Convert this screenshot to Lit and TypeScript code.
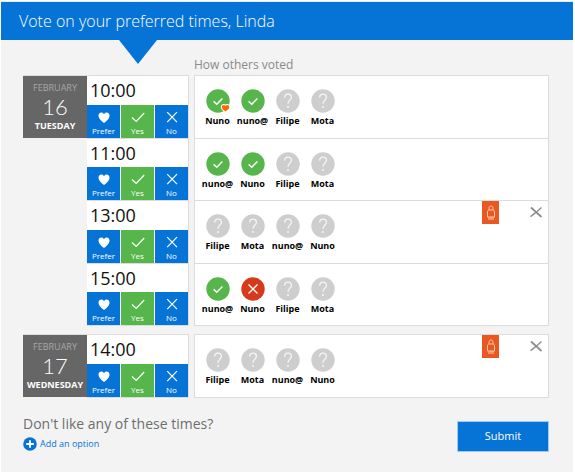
import { LitElement, html, css, svg } from "lit";
import { customElement, property } from "lit/decorators.js";

type Vote = "prefer" | "yes" | "no" | "none";
interface Person { name: string; vote: Vote; }
interface Slot { time: string; people: Person[]; conflict?: boolean; }
interface Day { month: string; day: string; weekday: string; slots: Slot[]; }

const p = (name: string, vote: Vote = "none"): Person => ({ name, vote });

const DAYS: Day[] = [
  {
    month: "FEBRUARY", day: "16", weekday: "TUESDAY",
    slots: [
      { time: "10:00", people: [p("Nuno", "prefer"), p("nuno@", "yes"), p("Filipe"), p("Mota")] },
      { time: "11:00", people: [p("nuno@", "yes"), p("Nuno", "yes"), p("Filipe"), p("Mota")] },
      { time: "13:00", people: [p("Filipe"), p("Mota"), p("nuno@"), p("Nuno")], conflict: true },
      { time: "15:00", people: [p("nuno@", "yes"), p("Nuno", "no"), p("Filipe"), p("Mota")] },
    ],
  },
  {
    month: "FEBRUARY", day: "17", weekday: "WEDNESDAY",
    slots: [
      { time: "14:00", people: [p("Filipe"), p("Mota"), p("nuno@"), p("Nuno")], conflict: true },
    ],
  },
];

const HEART = "M8 14 C4 11 2.5 9 2.5 6.5 C2.5 3.2 6.6 2.4 8 5.2 C9.4 2.4 13.5 3.2 13.5 6.5 C13.5 9 12 11 8 14 Z";
const SMALL_HEART = "M19.5 22.6 C17 20.8 15.8 19.6 15.8 18 C15.8 15.8 18.6 15.4 19.5 17 C20.4 15.4 23.2 15.8 23.2 18 C23.2 19.6 22 20.8 19.5 22.6 Z";

@customElement("vote-buttons")
class VoteButtons extends LitElement {
  static styles = css`
    :host { display: grid; grid-template-columns: repeat(3, 1fr); gap: 1px; height: 33px; }
    button {
      display: flex; flex-direction: column; align-items: center; justify-content: flex-end;
      padding: 0 0 1px; border: 0; background: #0673d6; color: #fff; min-width: 0;
      font: 8px/12px "Open Sans", "Noto Sans", sans-serif;
    }
    .yes { background: #56b64c; }
    svg { display: block; width: 16px; height: 16px; fill: none; stroke: #fff; }
    .heart { fill: #fff; stroke: none; }
  `;
  render() {
    return html`
      <button type="button">
        <svg viewBox="0 0 16 16" aria-hidden="true"><path class="heart" d=${HEART} /></svg>Prefer
      </button>
      <button type="button" class="yes" aria-pressed="true">
        <svg viewBox="0 0 16 16" aria-hidden="true"><path stroke-width="1.2" d="M2 8.5 L6.2 12.5 L14.2 4" /></svg>Yes
      </button>
      <button type="button">
        <svg viewBox="0 0 16 16" aria-hidden="true"><path stroke-width="1.2" d="M3.2 3.2 L13 13.2 M13 3.2 L3.2 13.2" /></svg>No
      </button>`;
  }
}

@customElement("voter-badge")
class VoterBadge extends LitElement {
  @property({ attribute: false }) person: Person = p("");
  static styles = css`
    :host { display: flex; flex-direction: column; align-items: center; width: 35px; }
    svg { display: block; width: 24px; height: 24px; overflow: visible; fill: none; stroke: #fff; }
    .disc { stroke: none; fill: #cecece; }
    .prefer .disc, .yes .disc { fill: #56b64c; }
    .no .disc { fill: #d53a1c; }
    .heart { fill: #ff6a00; stroke: #fff; stroke-width: 2px; paint-order: stroke; }
    .dot { fill: #f6f6f6; stroke: none; }
    .mark { stroke: #f6f6f6; }
    .name {
      font: 700 9px/16px "Open Sans", "Noto Sans", sans-serif; color: #000; white-space: nowrap;
    }
  `;
  render() {
    const { name, vote } = this.person;
    const sign =
      vote === "no" ? svg`<path stroke-width="1.3" d="M7.5 7.5 L16.5 16.5 M16.5 7.5 L7.5 16.5" />`
      : vote === "none" ? svg`<path class="mark" stroke-width="1.3" d="M8.6 8.6 C8.8 6.2 10.2 5.2 12 5.2 C14 5.2 15.4 6.5 15.4 8.4 C15.4 11 12 11.4 12 14.8" /><circle class="dot" cx="12" cy="18" r="1" />`
      : svg`<path stroke-width="1.4" d="M7.6 12.4 L10.8 15.2 L16.4 9.4" />`;
    return html`
      <svg class=${vote} viewBox="0 0 24 24" aria-hidden="true">
        <circle class="disc" cx="12" cy="12" r="11.7" />${sign}
        ${vote === "prefer" ? svg`<path class="heart" d=${SMALL_HEART} />` : ""}
      </svg>
      <span class="name">${name}</span>`;
  }
}

@customElement("app-root")
class AppRoot extends LitElement {
  static styles = css`
    :host {
      display: block; box-sizing: border-box; min-height: 100vh; padding: 1px 2px 3px 1px;
      background: #fff; font-family: "Open Sans", "Noto Sans", sans-serif;
    }
    .panel { background: #f3f3f3; padding-bottom: 20px; }
    .header {
      position: relative; display: flex; align-items: center; height: 38px; padding-left: 18px;
      background: #0673d6; color: #fff; border-top: 1px solid #e4edf6;
    }
    .header::after {
      content: ""; position: absolute; left: 118px; top: 100%; width: 38px; height: 24px;
      background: #0673d6; clip-path: polygon(0 0, 100% 0, 50% 100%);
    }
    h1 { margin: 0; font-size: 16px; line-height: 24px; font-weight: 300; }
    .content { padding: 0 24px 0 22px; }
    h2 { margin: 0; padding: 17px 0 2px 171px; font-size: 12px; line-height: 16px; font-weight: 400; color: #8a8a8a; }
    .day { display: grid; grid-template-columns: 64px 102px minmax(0, 1fr); margin-bottom: 8px; }
    .date {
      align-self: start; display: flex; flex-direction: column; align-items: center;
      box-sizing: border-box; height: 63px; padding-top: 6px; background: #666; color: #fff;
      border-top: 1px solid #ddd;
    }
    .month { font-size: 9px; line-height: 12px; color: #a6a6a6; }
    .number { font-family: Lato, "Open Sans", sans-serif; font-size: 22px; line-height: 26px; font-weight: 300; }
    .weekday { font-size: 9px; line-height: 12px; font-weight: 700; }
    .slots, .votes {
      display: grid; grid-auto-rows: 63px 62px; background: #fff;
      border: 1px solid #dcdcdc; border-bottom: 0;
    }
    .slots { border-left: 0; }
    .votes { margin-left: 5px; }
    .slot { display: flex; flex-direction: column; justify-content: space-between; border-bottom: 1px solid #dcdcdc; }
    .time { padding-left: 3px; font-size: 18px; line-height: 28px; color: #111; }
    .row { display: flex; align-items: flex-start; border-bottom: 1px solid #dcdcdc; padding: 0 5px; }
    .people { display: flex; flex: 1; padding-top: 13px; }
    .busy { display: grid; place-items: center; width: 17px; height: 23px; background: #e85820; margin-right: 30px; }
    .busy svg { width: 10px; height: 16px; fill: none; stroke: #ffc9ae; }
    .remove { margin: 4px 0 0; padding: 0; border: 0; background: none; }
    .remove svg { display: block; width: 14px; height: 14px; fill: none; stroke: #8e8e8e; }
    .footer { display: flex; justify-content: space-between; align-items: center; padding-top: 6px; }
    h3 { margin: 0; font-size: 14px; line-height: 24px; font-weight: 400; color: #6e6e6e; }
    .add { display: flex; align-items: center; gap: 3px; font-size: 9px; line-height: 16px; color: #0673d6; text-decoration: none; }
    .add svg { width: 14px; height: 14px; }
    .submit {
      width: 92px; height: 31px; margin-top: 8px; padding: 0; border: 1px solid #9fcaf2; background: #0673d6;
      color: #fff; font: 11px/16px "Open Sans", "Noto Sans", sans-serif;
    }
  `;

  private conflict() {
    return html`
      <span class="busy" role="img" aria-label="Busy">
        <svg viewBox="0 0 10 16"><path d="M3 5 V3.2 C3 .2 7 .2 7 3.2 V5 M1.5 12 V7 C1.5 5.6 2.3 5 3.4 5 H6.6 C7.7 5 8.5 5.6 8.5 7 V12 H1.5 M3 12 V15 M5 12 V15 M7 12 V15" /></svg>
      </span>
      <button type="button" class="remove" aria-label="Remove">
        <svg viewBox="0 0 14 14"><path stroke-width="1.8" d="M2 2.5 L12.5 12" /><path stroke-width="1.4" d="M12.5 2.5 L7 7.4 L1.5 11.6" /></svg>
      </button>`;
  }

  private day(d: Day) {
    return html`
      <section class="day">
        <div class="date">
          <span class="month">${d.month}</span>
          <span class="number">${d.day}</span>
          <span class="weekday">${d.weekday}</span>
        </div>
        <div class="slots">
          ${d.slots.map((s) => html`
            <div class="slot"><span class="time">${s.time}</span><vote-buttons></vote-buttons></div>`)}
        </div>
        <div class="votes">
          ${d.slots.map((s) => html`
            <div class="row">
              <div class="people">${s.people.map((v) => html`<voter-badge .person=${v}></voter-badge>`)}</div>
              ${s.conflict ? this.conflict() : ""}
            </div>`)}
        </div>
      </section>`;
  }

  render() {
    return html`
      <main class="panel">
        <header class="header"><h1>Vote on your preferred times, Linda</h1></header>
        <div class="content">
          <h2>How others voted</h2>
          ${DAYS.map((d) => this.day(d))}
          <div class="footer">
            <div>
              <h3>Don't like any of these times?</h3>
              <a class="add" href="#add">
                <svg viewBox="0 0 14 14" aria-hidden="true"><circle cx="7" cy="7" r="6.8" fill="#0673d6" /><path d="M7 3.2 V10.8 M3.2 7 H10.8" stroke="#fff" stroke-width="1.8" /></svg>
                Add an option
              </a>
            </div>
            <button type="button" class="submit">Submit</button>
          </div>
        </div>
      </main>`;
  }
}
